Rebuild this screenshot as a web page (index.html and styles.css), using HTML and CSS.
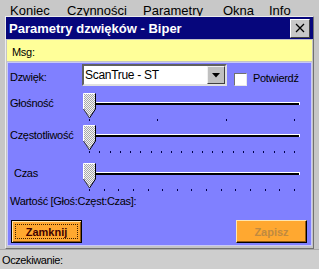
FILE: index.html
```html
<!DOCTYPE html>
<html lang="pl">
<head>
    <meta charset="UTF-8">
    <title>Parametry dzwięków - Biper</title>
    <link rel="stylesheet" href="styles.css">
</head>
<body>
    <div class="menubar">
        <span>Koniec</span>
        <span>Czynności</span>
        <span>Parametry</span>
        <span>Okna</span>
        <span>Info</span>
    </div>

    <div class="dialog">
        <div class="titlebar">
            <span class="title">Parametry dzwięków - Biper</span>
            <span class="close">
                <svg width="10" height="10" viewBox="0 0 10 10">
                    <path d="M1 1 L9 9 M9 1 L1 9" stroke="#000" stroke-width="1.3" fill="none"/>
                </svg>
            </span>
        </div>
        <div class="msg">Msg:</div>

        <div class="panel">
            <div class="sound-row">
                <span class="label">Dzwięk:</span>
                <div class="select">
                    <span>ScanTrue - ST</span>
                    <span class="drop">
                        <svg width="8" height="5" viewBox="0 0 8 5"><path d="M0 0 H8 L4 4.5 Z" fill="#000"/></svg>
                    </span>
                </div>
                <span class="check"></span>
                <span class="check-label">Potwierdź</span>
            </div>

            <!-- shared dither for the slider thumbs -->
            <svg width="0" height="0" class="defs">
                <defs>
                    <pattern id="dither" width="2" height="2" patternUnits="userSpaceOnUse">
                        <rect width="2" height="2" fill="#f4f4f4"/>
                        <rect width="1" height="1" fill="#a8a8a8"/>
                        <rect x="1" y="1" width="1" height="1" fill="#a8a8a8"/>
                    </pattern>
                </defs>
            </svg>

            <div class="slider-row row-volume">
                <span class="label">Głośność</span>
                <div class="slider">
                    <div class="track"></div>
                    <svg class="thumb" width="13" height="26" viewBox="0 0 13 26">
                        <path d="M1 1 H12 V16 L6.5 24.5 L1 16 Z" fill="url(#dither)"/>
                        <polyline points="0.5,16 0.5,0.5 12,0.5" stroke="#fff" fill="none"/>
                        <polyline points="12.5,0.5 12.5,16 6.5,25" stroke="#000" fill="none"/>
                        <polyline points="0.5,16 6.5,25" stroke="#404040" fill="none"/>
                    </svg>
                    <div class="ticks" data-count="4"></div>
                </div>
            </div>

            <div class="slider-row row-freq">
                <span class="label">Częstotliwość</span>
                <div class="slider">
                    <div class="track"></div>
                    <svg class="thumb" width="13" height="26" viewBox="0 0 13 26">
                        <path d="M1 1 H12 V16 L6.5 24.5 L1 16 Z" fill="url(#dither)"/>
                        <polyline points="0.5,16 0.5,0.5 12,0.5" stroke="#fff" fill="none"/>
                        <polyline points="12.5,0.5 12.5,16 6.5,25" stroke="#000" fill="none"/>
                        <polyline points="0.5,16 6.5,25" stroke="#404040" fill="none"/>
                    </svg>
                    <div class="ticks" data-count="21"></div>
                </div>
            </div>

            <div class="slider-row row-time">
                <span class="label label-time">Czas</span>
                <div class="slider">
                    <div class="track"></div>
                    <svg class="thumb" width="13" height="26" viewBox="0 0 13 26">
                        <path d="M1 1 H12 V16 L6.5 24.5 L1 16 Z" fill="url(#dither)"/>
                        <polyline points="0.5,16 0.5,0.5 12,0.5" stroke="#fff" fill="none"/>
                        <polyline points="12.5,0.5 12.5,16 6.5,25" stroke="#000" fill="none"/>
                        <polyline points="0.5,16 6.5,25" stroke="#404040" fill="none"/>
                    </svg>
                    <div class="ticks" data-count="15"></div>
                </div>
            </div>

            <div class="value">Wartość [Głoś:Częst:Czas]:</div>

            <div class="button-row">
                <button class="btn btn-default"><span>Zamknij</span></button>
                <button class="btn btn-disabled">Zapisz</button>
            </div>
        </div>
    </div>

    <div class="status">Oczekiwanie:</div>

    <script>
        // fill each tick strip with its number of marks
        document.querySelectorAll('.ticks').forEach(strip => {
            const count = parseInt(strip.dataset.count, 10);
            for (let i = 0; i < count; i++) {
                const tick = document.createElement('span');
                tick.className = 'tick';
                strip.appendChild(tick);
            }
        });
    </script>
</body>
</html>
```

FILE: styles.css
```css
body {
    margin: 0;
    width: 319px;
    height: 269px;
    overflow: hidden;
    background-color: #c6c6c6;
    font-family: "Liberation Sans", Arial, sans-serif;
    font-size: 11px;
    letter-spacing: -0.3px;
    color: #000;
}
.menubar {
    height: 16px;
    box-sizing: border-box;
    padding: 3px 0 0 10px;
    overflow: hidden;
    display: grid;
    grid-template-columns: 57px 76px 80px 46px auto;
    font-size: 13px;
    line-height: 16px;
    letter-spacing: 0;
    background-color: #c8c8c8;
}
.dialog {
    margin-left: 5px;
    width: 309px;
    box-sizing: border-box;
    border: 1px solid #ececec;
    border-right-color: #707070;
    border-bottom-color: #707070;
    background-color: #c4c4c4;
}
.titlebar {
    height: 22px;
    display: flex;
    align-items: center;
    padding-left: 3px;
    background-color: #06067c;
}
.title {
    color: #fff;
    font-size: 13px;
    font-weight: bold;
    letter-spacing: 0;
}
.close {
    margin-left: auto;
    margin-right: 3px;
    width: 20px;
    height: 19px;
    box-sizing: border-box;
    display: flex;
    align-items: center;
    justify-content: center;
    background-color: #c8c8c8;
    border: 1px solid;
    border-color: #fff #404040 #404040 #fff;
}
.msg {
    margin: 1px 0 0 1px;
    width: 305px;
    height: 21px;
    box-sizing: border-box;
    padding: 6px 0 0 5px;
    line-height: 13px;
    background-color: #ffff99;
}
.panel {
    margin: 1px 0 2px 1px;
    width: 305px;
    box-sizing: border-box;
    padding: 1px 2px 2px 2px;
    border: 1px solid #c8c8f8;
    background-color: #8080ff;
}
.label {
    width: 72px;
    flex-shrink: 0;
}
.sound-row {
    height: 22px;
    display: flex;
    align-items: flex-end;
}
.sound-row .label {
    align-self: center;
    padding-top: 3px;
}
.select {
    width: 145px;
    height: 22px;
    box-sizing: border-box;
    display: flex;
    align-items: center;
    padding-left: 1px;
    border: 2px solid;
    border-color: #606060 #e0e0e0 #e0e0e0 #606060;
    background-color: #fff;
    font-size: 12px;
}
.drop {
    margin-left: auto;
    width: 18px;
    height: 18px;
    box-sizing: border-box;
    display: flex;
    align-items: center;
    justify-content: center;
    background-color: #c0c0c0;
    border: 1px solid;
    border-color: #f0f0f0 #404040 #404040 #f0f0f0;
}
.check {
    margin-left: 7px;
    width: 13px;
    height: 13px;
    box-sizing: border-box;
    border: 1px solid;
    border-color: #707070 #e8e8e8 #e8e8e8 #707070;
    background-color: #fff;
}
.check-label {
    margin-left: 6px;
    line-height: 13px;
    padding-bottom: 1px;
}
.defs {
    position: absolute;
}
.slider-row {
    height: 30px;
    display: flex;
}
.slider-row .label {
    width: 73px;
    line-height: 20px;
}
.label-time {
    padding-left: 4px;
    box-sizing: border-box;
}
.row-volume {
    margin-top: 7px;
}
.row-freq {
    margin-top: 2px;
}
.row-time {
    margin-top: 8px;
}
.slider {
    position: relative;
    width: 218px;
    height: 30px;
}
.track {
    margin: 9px 1px 0 1px;
    height: 2px;
    border-top: 1px solid #fff;
    border-right: 1px solid #fff;
    background-color: #000;
}
.thumb {
    position: absolute;
    left: 0;
    top: 0;
}
.ticks {
    margin-top: 14px;
    padding: 0 6px;
    display: flex;
    justify-content: space-between;
}
.tick {
    width: 1px;
    height: 2px;
    background-color: #00004a;
}
.value {
    margin-top: 1px;
    line-height: 14px;
}
.button-row {
    margin-top: 12px;
    padding: 0 2px 0 1px;
    display: flex;
    justify-content: space-between;
}
.btn {
    width: 71px;
    height: 23px;
    padding: 0;
    box-sizing: border-box;
    background-color: #ffa830;
    font-family: "Liberation Sans", Arial, sans-serif;
    font-size: 11px;
    font-weight: bold;
    letter-spacing: 0;
    border: 1px solid;
    border-color: #ffe6b0 #000 #000 #ffe6b0;
    box-shadow: inset -1px -1px #905810;
}
.btn-default {
    border-color: #000;
    box-shadow: inset 1px 1px #ffe6b0, inset -1px -1px #905810;
    color: #400000;
    display: flex;
    align-items: center;
    justify-content: center;
}
.btn-default span {
    display: block;
    width: 63px;
    height: 15px;
    line-height: 15px;
    box-sizing: border-box;
    border: 1px dotted #402000;
}
.btn-disabled {
    color: #c08a40;
}
.status {
    height: 20px;
    box-sizing: border-box;
    padding: 3px 0 0 2px;
    line-height: 14px;
    letter-spacing: -0.4px;
    border-top: 1px solid #a8a8a8;
    background-color: #cecece;
}
```
